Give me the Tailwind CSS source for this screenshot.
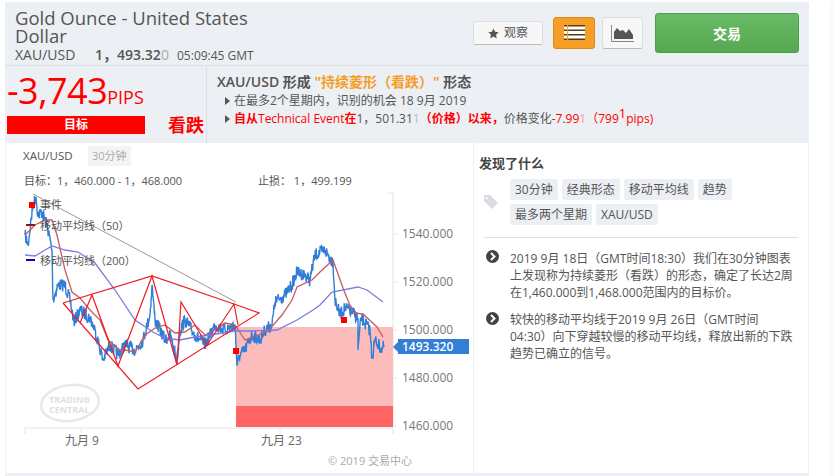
<!DOCTYPE html>
<html lang="zh">
<head>
    <meta charset="UTF-8">
    <title>XAU/USD</title>
    <script src="https://cdn.jsdelivr.net/npm/@tailwindcss/browser@4"></script>
</head>
<body class="bg-white overflow-hidden font-['Open_Sans','Noto_Sans_CJK_SC',sans-serif] text-[#555]">
    <div class="w-[834px] h-[476px] pl-[5px] pt-[2px] flex">
        <div class="w-[804px] h-[474px] pb-[3px] bg-[#eceff3] flex flex-col">

            <!-- header -->
            <div class="h-[64px] flex border-b border-[#dcdfe4] shrink-0">
                <div class="w-[460px] pl-[10px] pt-[7px]">
                    <h1 class="w-[250px] text-[18.5px] leading-[18px] text-[#555]">Gold Ounce - United States Dollar</h1>
                    <div class="flex items-baseline mt-[1px] h-[18px] text-[14px] leading-[18px]">
                        <span class="w-[80px]">XAU/USD</span>
                        <span class="font-semibold w-[82px]">1，493.32<span class="font-normal text-[#aaa]">0</span></span>
                        <span class="text-[12px]">05:09:45 GMT</span>
                    </div>
                </div>
                <div class="flex items-start ml-[8px]">
                    <button class="mt-[19px] w-[70px] h-[24px] bg-[#f7f7f7] border border-[#ddd] border-b-[#bbb] rounded-[2px] flex items-center justify-center gap-[5px] text-[12px]">
                        <svg width="11" height="11" viewBox="0 0 24 24" fill="#555"><path d="M12 1l3.4 7.3 7.9 1-5.8 5.5 1.5 7.9-7-3.9-7 3.9 1.5-7.9L.7 9.3l7.9-1z"/></svg>
                        观察
                    </button>
                    <button class="mt-[15px] ml-[10px] w-[42px] h-[32px] bg-[#f69e26] border border-[#dc8a1c] rounded-[3px] flex items-center justify-center">
                        <svg width="21" height="16" viewBox="0 0 21 16"><path fill="#fff" d="M0 0h21v15H0z"/><path fill="#5a3a10" d="M0 0h21v1.500H0zM0 4.500h21v1.500H0zM0 9h21v1.500H0zM0 13.500h21V15H0z"/><path fill="#f69e26" d="M3 0h1.200v15H3z"/></svg>
                    </button>
                    <button class="mt-[15px] ml-[7px] w-[41px] h-[32px] bg-[#f7f7f7] border border-[#ddd] border-b-[#bbb] rounded-[3px] flex items-center justify-center">
                        <svg width="23" height="17" viewBox="0 0 23 17"><path fill="#555" d="M3 14V7l3-4 3 3 3-1 3 3 3-4 4 6v4z"/><path fill="none" stroke="#888" d="M.5 0v16.500H23"/></svg>
                    </button>
                    <button class="mt-[11px] ml-[12px] w-[144px] h-[40px] bg-linear-to-b from-[#69bb65] to-[#56a951] border border-[#4f9e4b] rounded-[3px] text-white font-bold text-[14px]">交易</button>
                </div>
            </div>

            <!-- signal summary -->
            <div class="h-[77px] flex shrink-0">
                <div class="w-[202px] h-[77px] border-r border-[#dcdfe4] pl-[2px] relative">
                    <div class="flex items-baseline h-[50px] text-[#f00]">
                        <span class="text-[36px] leading-[50px] tracking-[-0.5px]">-3,743</span>
                        <span class="text-[18px]">PIPS</span>
                    </div>
                    <div class="flex items-center">
                        <div class="w-[138px] h-[18px] bg-[#f00] text-white font-bold text-[12px] leading-[18px] text-center">目标</div>
                        <div class="ml-[23px] text-[18px] font-bold text-[#f00] leading-[18px]">看跌</div>
                    </div>
                </div>
                <div class="pl-[10px] pt-[7px]">
                    <div class="text-[14px] font-semibold leading-[18px] h-[18px] whitespace-nowrap">XAU/USD 形成 <span class="text-[#f59e26] font-bold">"持续菱形（看跌）"</span> 形态</div>
                    <div class="flex items-center mt-[1px] h-[18px] text-[12px] ml-[8px]">
                        <span class="w-0 h-0 border-y-[4px] border-y-transparent border-l-[5px] border-l-[#555] mr-[4px]"></span>
                        在最多2个星期内，识别的机会 18 9月 2019
                    </div>
                    <div class="flex items-center h-[18px] text-[12px] ml-[8px] whitespace-nowrap">
                        <span class="w-0 h-0 border-y-[4px] border-y-transparent border-l-[5px] border-l-[#555] mr-[4px]"></span>
                        <span class="text-[#f00]"><b>自从</b>Technical Event<b>在</b></span>1，501.31<span class="text-[#bbb]">1</span>
                        <span class="text-[#f00] font-bold">（价格）以来，</span>价格变化<span class="text-[#f00]">-7.99<span class="text-[#f4a0a0]">1</span>（799<sup class="text-[13px] -top-[5px]">1</sup>pips)</span>
                    </div>
                </div>
            </div>

            <!-- main -->
            <div class="flex-1 flex pl-[1px] pr-0 min-h-0">
                <div class="relative w-[467px] h-full bg-white">
                    <svg id="chart" class="absolute left-0 top-0" width="467" height="330" viewBox="6 143 467 330">
                        <!-- axes -->
                        <path d="M25 434v-6H393M81 428v5M280 428v5M388 193h5V434M393 234h4M393 282h4M393 330h4M393 378h4M393 426h4" fill="none" stroke="#f0f1f4" stroke-width="2"/>
                        <rect x="236" y="327" width="157" height="79" fill="#fdbcbc"/>
                        <rect x="236" y="406" width="157" height="21" fill="#ff6363"/>
                        <!-- watermark -->
                        <ellipse cx="70" cy="403" rx="29" ry="18" fill="none" stroke="#e8e8e8" stroke-width="2.500" transform="rotate(-8 70 403)"/>
                        <text x="49" y="403" font-size="9" font-weight="700" fill="#e0e0e0">TRADING</text>
                        <text x="49" y="413" font-size="9" font-weight="700" fill="#e0e0e0">CENTRAL</text>
                        <path id="price" fill="none" stroke="#2f7dd6" stroke-width="1.400"/>
                        <polyline points="33,194 236,302" fill="none" stroke="#999" stroke-width="1"/>
                        <polyline points="25,235 35,225 45,220 52,220 57,235 65,270 72,292 80,298 90,310 100,320 108,340 120,350 125,350 135,352 145,335 155,328 165,325 175,333 185,332 195,325 205,335 215,330 225,323 235,325 245,340 255,336 268,331 282,315 292,300 297,287 312,280 320,272 333,260 343,288 353,313 363,314 377,327 383,337" fill="none" stroke="#c75a5f" stroke-width="1.300"/>
                        <polyline points="25,255 35,256 45,250 52,246 65,250 78,252 95,263 115,290 135,320 153,332 165,338 180,340 195,337 210,335 235,331 250,331 277,330 297,320 313,310 320,305 332,292 358,287 367,290 383,302" fill="none" stroke="#7b7be0" stroke-width="1.300"/>
                        <polyline points="63,303 152,276 234,304 259,313 138,389 63,303" fill="none" stroke="#f01c24" stroke-width="1.200"/>
                        <polyline points="80,323 92,295 118,366 152,276 177,365 181,302 207,345 234,304 238,325" fill="none" stroke="#f01c24" stroke-width="1.200"/>
                        <rect x="29" y="202" width="6" height="6" fill="#f00"/>
                        <rect x="233" y="348" width="6" height="6" fill="#f00"/>
                        <rect x="341" y="317" width="6" height="6" fill="#f00"/>
                        <rect x="26" y="224" width="9" height="2" fill="#8b1414"/>
                        <rect x="26" y="259" width="9" height="2" fill="#0000c8"/>
                    </svg>

                    <div class="absolute left-[17px] top-[3px] flex items-center text-[11.500px] leading-[20px]">
                        <span class="w-[65px]">XAU/USD</span>
                        <span class="px-[4px] bg-[#f4f4f4] text-[#aaa] rounded-[2px] text-[11px]">30分钟</span>
                    </div>
                    <div class="absolute left-[18px] top-[30px] text-[11px] leading-[16px]">目标：1，460.000 - 1，468.000</div>
                    <div class="absolute left-[252px] top-[30px] text-[11px] leading-[16px]">止损： 1，499.199</div>
                    <div class="absolute left-[34px] top-[54px] text-[11px] leading-[16px]">事件</div>
                    <div class="absolute left-[34px] top-[75px] text-[11px] leading-[16px]">移动平均线（50）</div>
                    <div class="absolute left-[34px] top-[110px] text-[11px] leading-[16px]">移动平均线（200）</div>
                    <div class="absolute left-[396px] top-[83px] text-[12px] leading-[16px] text-[#777]">1540.000</div>
                    <div class="absolute left-[396px] top-[131px] text-[12px] leading-[16px] text-[#777]">1520.000</div>
                    <div class="absolute left-[396px] top-[179px] text-[12px] leading-[16px] text-[#777]">1500.000</div>
                    <div class="absolute left-[396px] top-[227px] text-[12px] leading-[16px] text-[#777]">1480.000</div>
                    <div class="absolute left-[396px] top-[275px] text-[12px] leading-[16px] text-[#777]">1460.000</div>
                    <div class="absolute left-[387px] top-[196px] w-[76px] h-[15px] flex items-center">
                        <span class="w-0 h-0 border-y-[5px] border-y-transparent border-r-[5px] border-r-[#337fd6]"></span>
                        <span class="flex-1 bg-[#337fd6] text-white font-semibold text-[12px] leading-[15px] pl-[4px]">1493.320</span>
                    </div>
                    <div class="absolute left-[59px] top-[290px] text-[12px] leading-[16px] text-[#666]">九月 9</div>
                    <div class="absolute left-[255px] top-[290px] text-[12px] leading-[16px] text-[#666]">九月 23</div>
                    <div class="absolute left-[322px] top-[310px] text-[11px] leading-[16px] text-[#aaa]">© 2019 交易中心</div>
                </div>

                <!-- findings -->
                <div class="w-[334px] h-full bg-white ml-[1px] pl-[5px] pr-[10px] pt-[11px]">
                    <h2 class="text-[13px] font-bold leading-[18px] text-[#444]">发现了什么</h2>
                    <div class="flex items-center mt-[7px]">
                        <svg class="ml-[4px] w-[16px] h-[16px]" viewBox="0 0 16 16" fill="#d9dde3"><path d="M1 1h6l8 8-6 6-8-8zM4 3a1 1 0 100 2 1 1 0 000-2z" fill-rule="evenodd"/></svg>
                        <div class="ml-[11px] flex flex-wrap gap-x-[4px] gap-y-[4px] w-[280px] text-[12px] leading-[21px]">
                            <span class="px-[5px] bg-[#eceff3] rounded-[2px]">30分钟</span>
                            <span class="px-[5px] bg-[#eceff3] rounded-[2px]">经典形态</span>
                            <span class="px-[5px] bg-[#eceff3] rounded-[2px]">移动平均线</span>
                            <span class="px-[5px] bg-[#eceff3] rounded-[2px]">趋势</span>
                            <span class="px-[5px] bg-[#eceff3] rounded-[2px]">最多两个星期</span>
                            <span class="px-[5px] bg-[#eceff3] rounded-[2px]">XAU/USD</span>
                        </div>
                    </div>
                    <hr class="mt-[12px] ml-[5px] border-[#dcdfe4]">
                    <ul class="mt-[12px] text-[12px] leading-[17px] space-y-[10px]">
                        <li class="flex">
                            <svg class="ml-[7px] w-[13px] h-[13px] shrink-0" viewBox="0 0 13 13"><circle cx="6.500" cy="6.500" r="6.500" fill="#444"/><path d="M5 3l3.500 3.500L5 10" fill="none" stroke="#fff" stroke-width="2"/></svg>
                            <span class="ml-[11px] whitespace-nowrap">2019 9月 18日（GMT时间18:30）我们在30分钟图表<br>上发现称为持续菱形（看跌）的形态，确定了长达2周<br>在1,460.000到1,468.000范围内的目标价。</span>
                        </li>
                        <li class="flex">
                            <svg class="ml-[7px] mt-[1px] w-[13px] h-[13px] shrink-0" viewBox="0 0 13 13"><circle cx="6.500" cy="6.500" r="6.500" fill="#444"/><path d="M5 3l3.500 3.500L5 10" fill="none" stroke="#fff" stroke-width="2"/></svg>
                            <span class="ml-[11px] whitespace-nowrap">较快的移动平均线于2019 9月 26日（GMT时间<br>04:30）向下穿越较慢的移动平均线，释放出新的下跌<br>趋势已确立的信号。</span>
                        </li>
                    </ul>
                </div>
            </div>
        </div>
        <div class="ml-[20px] w-[5px] h-full bg-[#fafafa]"></div>
    </div>

    <script>
        // jagged price line between hand-read key points
        const keys = [[25,235],[28,245],[33,205],[36,197],[38,215],[42,212],[47,225],[52,250],[53,300],[58,285],[65,285],[70,300],[74,322],[80,310],[90,318],[95,330],[103,360],[110,345],[118,355],[125,345],[135,350],[143,340],[150,315],[152,285],[155,320],[165,340],[170,335],[177,360],[180,330],[185,320],[195,335],[205,345],[215,325],[225,330],[235,325],[237,365],[240,355],[245,350],[252,335],[260,340],[265,330],[272,325],[275,302],[285,295],[292,285],[297,272],[305,275],[310,280],[315,255],[325,250],[330,258],[333,262],[335,300],[340,315],[345,308],[352,312],[358,318],[358,350],[361,318],[370,330],[372,358],[375,340],[382,350],[384,345]];
        let seed = 7;
        const rand = () => (seed = (seed * 16807) % 2147483647) / 2147483647;
        let d = 'M' + keys[0].join(' ');
        for (let i = 1; i < keys.length; i++) {
            const [x0, y0] = keys[i - 1], [x1, y1] = keys[i];
            const steps = Math.max(1, Math.round((x1 - x0) * 2.5));
            for (let s = 1; s <= steps; s++) {
                const t = s / steps;
                const j = s === steps ? 0 : (rand() - 0.5) * 13;
                d += ' L' + (x0 + (x1 - x0) * t).toFixed(1) + ' ' + (y0 + (y1 - y0) * t + j).toFixed(1);
            }
        }
        document.getElementById('price').setAttribute('d', d);
    </script>
</body>
</html>
